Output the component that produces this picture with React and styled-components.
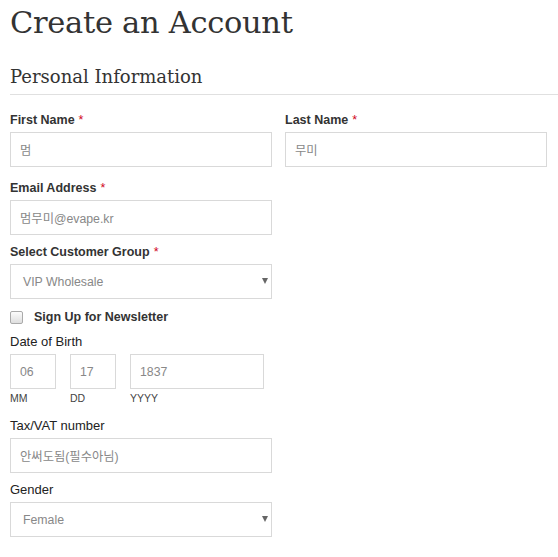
import React from 'react'
import styled, { createGlobalStyle } from 'styled-components'

const Global = createGlobalStyle`
  html, body { margin: 0; padding: 0; background: #fff; }
  body { font-family: "Liberation Sans", Arial, "Noto Sans CJK KR", sans-serif; color: #333; }
`

const Page = styled.div`
  padding: 0 0 0 10px;
`

const Title = styled.h1`
  margin: 0;
  font-family: "DejaVu Serif", "Liberation Serif", serif;
  font-weight: normal;
  font-size: 30.5px;
  line-height: 46px;
  color: #333;
  letter-spacing: -0.3px;
`

const Section = styled.h2`
  margin: 14px 0 0;
  font-family: "DejaVu Serif", "Liberation Serif", serif;
  font-weight: normal;
  font-size: 18px;
  line-height: 34px;
  color: #333;
  border-bottom: 1px solid #e0e0e0;
`

const Row = styled.div`
  display: grid;
  grid-template-columns: 275px 1fr;
  padding-top: 17px;
  margin-bottom: 4px;
`

const Field = styled.div`
  width: ${p => p.$w || 262}px;
  margin-bottom: ${p => p.$mb ?? 9}px;
`

const Label = styled.div`
  font-size: ${p => p.$plain ? 13 : 12.5}px;
  font-weight: ${p => p.$plain ? 'normal' : 'bold'};
  line-height: 16px;
  color: ${p => p.$plain ? '#222' : '#333'};
  margin-bottom: 4px;
  span { color: #d0021b; margin-left: 4px; font-weight: normal; }
`

const Input = styled.div`
  box-sizing: border-box;
  height: 35px;
  width: ${p => p.$w ? p.$w + 'px' : '100%'};
  border: 1px solid #d9d9d9;
  padding: 0 ${p => p.$pl || 9}px;
  display: flex;
  align-items: center;
  font-size: 12.3px;
  color: #888;
  font-family: "Liberation Sans", Arial, "Noto Sans CJK KR", sans-serif;
  position: relative;
`

const Arrow = styled.span`
  position: absolute;
  right: 3px;
  top: 13px;
  width: 0;
  height: 0;
  border-left: 3.5px solid transparent;
  border-right: 3.5px solid transparent;
  border-top: 6px solid #666;
`

const CheckRow = styled.div`
  display: flex;
  align-items: center;
  height: 18px;
  margin-bottom: 8px;
  font-size: 12.5px;
  font-weight: bold;
  color: #333;
`

const Box = styled.span`
  box-sizing: border-box;
  width: 13px;
  height: 13px;
  border: 1px solid #aaa;
  border-radius: 2px;
  background: linear-gradient(#fcfcfc, #dedede);
  margin-right: 11px;
`

const DateRow = styled.div`
  display: flex;
  gap: 14px;
  margin-bottom: 13px;
`

const DatePart = styled.div`
  display: flex;
  flex-direction: column;
`

const Sub = styled.div`
  font-size: 10.5px;
  line-height: 14px;
  margin-top: 2px;
  color: #444;
`

function Req({ children }) {
  return <Label>{children}<span>*</span></Label>
}

export default function App() {
  return (
    <Page>
      <Global />
      <Title>Create an Account</Title>
      <Section>Personal Information</Section>
      <Row>
        <Field>
          <Req>First Name</Req>
          <Input>멈</Input>
        </Field>
        <Field>
          <Req>Last Name</Req>
          <Input>무미</Input>
        </Field>
      </Row>
      <Field>
        <Req>Email Address</Req>
        <Input>멈무미@evape.kr</Input>
      </Field>
      <Field>
        <Req>Select Customer Group</Req>
        <Input $pl={12}>VIP Wholesale<Arrow /></Input>
      </Field>
      <CheckRow><Box />Sign Up for Newsletter</CheckRow>
      <Field $mb={0}>
        <Label $plain>Date of Birth</Label>
      </Field>
      <DateRow>
        <DatePart><Input $w={46}>06</Input><Sub>MM</Sub></DatePart>
        <DatePart><Input $w={46}>17</Input><Sub>DD</Sub></DatePart>
        <DatePart><Input $w={134}>1837</Input><Sub>YYYY</Sub></DatePart>
      </DateRow>
      <Field>
        <Label $plain>Tax/VAT number</Label>
        <Input>안써도됨(필수아님)</Input>
      </Field>
      <Field>
        <Label $plain>Gender</Label>
        <Input $pl={12}>Female<Arrow /></Input>
      </Field>
    </Page>
  )
}
